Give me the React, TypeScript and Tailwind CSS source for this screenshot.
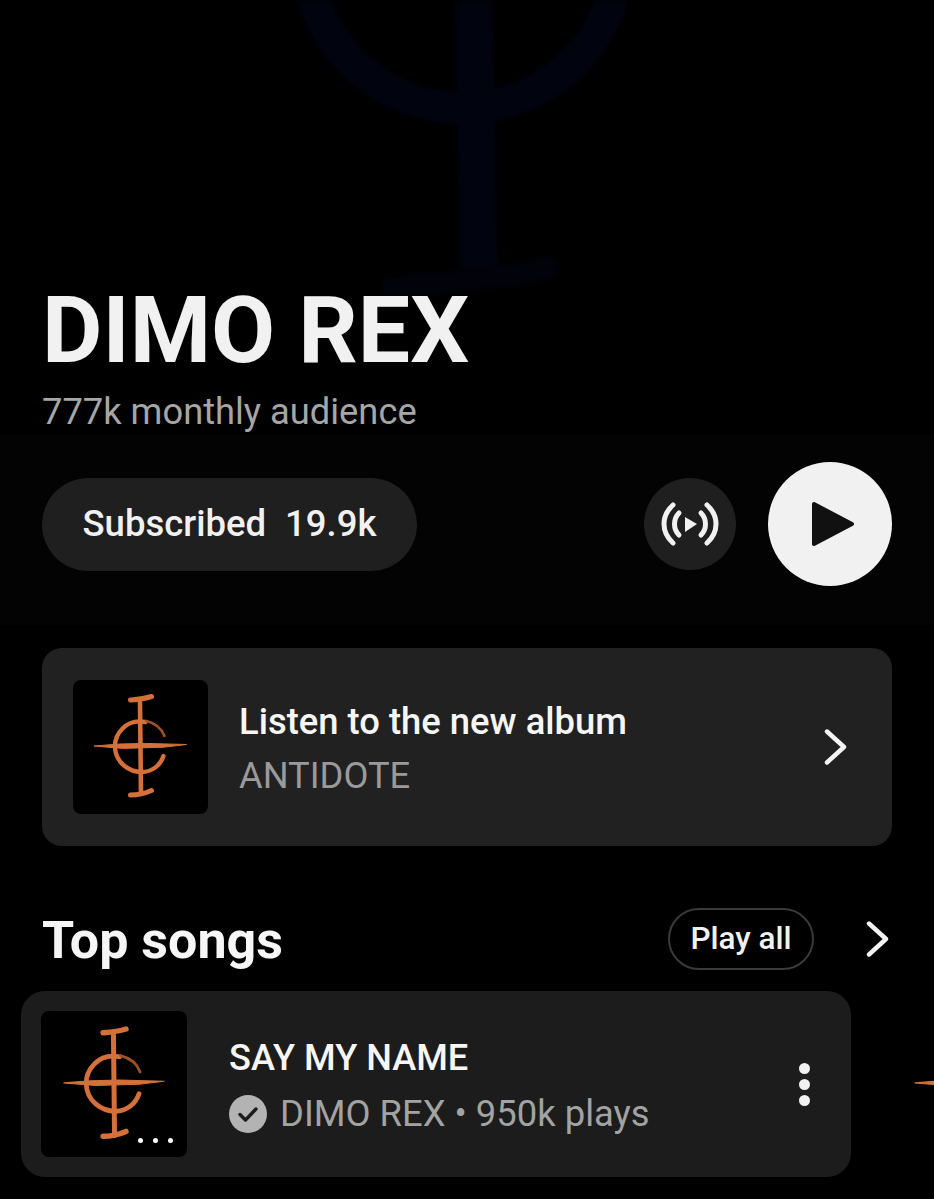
function Sigil({ className }: { className?: string }) {
  return (
    <svg viewBox="0 0 134 134" className={className} fill="none" strokeLinecap="round">
      <g stroke="#d4703a">
        <path d="M66.5 22 L67.5 114" strokeWidth="4.6" />
        <path d="M21 66 L46 64 L72 63.4 L113 64.5 L90 67.2 L50 68.4 Z" fill="#d4703a" strokeWidth="1" strokeLinejoin="round" />
        <path d="M72 42 C52 38 41 55 41.5 67 C42 83 56 92 68 92 C79 92 87 85 90 76" strokeWidth="4.4" />
        <path d="M73 41 C81 43 88 48 91 56" strokeWidth="2.6" stroke="#9a5229" />
        <path d="M57 20 C63 19.5 70 19 78 16.5" strokeWidth="5" />
        <path d="M57 115 C63 115 70 114 78 110.5" strokeWidth="5" />
      </g>
    </svg>
  );
}

function Chevron({ className }: { className?: string }) {
  return (
    <svg viewBox="0 0 24 36" className={className} fill="none" stroke="#f4f4f4" strokeWidth="4.4" strokeLinecap="round" strokeLinejoin="round">
      <path d="M3 2.5 L20 18 L3 33.5" />
    </svg>
  );
}

function Thumb({ size, dots }: { size: string; dots?: boolean }) {
  return (
    <div className={`relative shrink-0 rounded-lg bg-black ${size}`}>
      <Sigil className="h-full w-full" />
      {dots && (
        <div className="absolute bottom-[14px] right-[14px] flex gap-[10px]">
          <span className="h-[5px] w-[5px] rounded-full bg-white" />
          <span className="h-[5px] w-[5px] rounded-full bg-white" />
          <span className="h-[5px] w-[5px] rounded-full bg-white" />
        </div>
      )}
    </div>
  );
}

function SongRow({ title, meta }: { title: string; meta: string }) {
  return (
    <div className="flex h-[186px] w-[830px] shrink-0 items-center rounded-3xl bg-[#1c1c1c] pl-5 pr-[41px]">
      <Thumb size="h-[146px] w-[146px]" dots />
      <div className="ml-[42px] min-w-0 flex-1 pt-[4px]">
        <p className="text-[36.2px] leading-[44px] font-medium text-[#f6f6f6]">{title}</p>
        <div className="mt-[12px] flex items-center gap-[13px]">
          <svg viewBox="0 0 38 38" className="h-[38px] w-[38px]">
            <circle cx="19" cy="19" r="19" fill="#b3b3b3" />
            <path d="M11 19.5 L16.5 25 L27 14" fill="none" stroke="#1c1c1c" strokeWidth="3.4" strokeLinecap="round" strokeLinejoin="round" />
          </svg>
          <p className="text-[36.4px] leading-[44px] text-[#a3a3a3]">{meta}</p>
        </div>
      </div>
      <div className="flex flex-col gap-[5px]">
        <span className="h-[11px] w-[11px] rounded-full bg-[#f1f1f1]" />
        <span className="h-[11px] w-[11px] rounded-full bg-[#f1f1f1]" />
        <span className="h-[11px] w-[11px] rounded-full bg-[#f1f1f1]" />
      </div>
    </div>
  );
}

export default function App() {
  return (
    <div className="relative h-[1199px] w-[934px] overflow-hidden bg-black font-['Roboto',sans-serif]">
      {/* faded cover art behind the header */}
      <svg viewBox="0 0 934 300" className="absolute inset-x-0 top-0 h-[300px] w-[934px] blur-[2px]" fill="none">
        <g stroke="#01030e">
          <circle cx="463" cy="-49" r="157" strokeWidth="33" />
          <path d="M474 0 L479 268" strokeWidth="38" />
        </g>
        <path d="M392 287 C440 282 500 280 548 268" stroke="#01020a" strokeWidth="22" strokeLinecap="round" />
      </svg>

      <div className="relative">
        <h1 className="pt-[279px] pl-[42px] text-[93px] leading-[104px] font-bold text-[#f1f1f1]">DIMO REX</h1>
        <p className="mt-[6px] pl-[42px] text-[36.3px] leading-[46px] text-[#a6a6a6]">777k monthly audience</p>

        <div className="flex items-center justify-between bg-[#030303] px-[42px] pt-[27px] pb-[39px]">
          <div className="flex h-[93px] w-[375px] items-center justify-center gap-[19px] rounded-full bg-[#1f1f1f] text-[36.5px] font-medium text-[#f1f1f1]">
            <span>Subscribed</span>
            <span>19.9k</span>
          </div>
          <div className="flex items-center gap-[32px]">
            <div className="flex h-[92px] w-[92px] items-center justify-center rounded-full bg-[#1f1f1f]">
              <svg viewBox="-30 -30 60 60" className="h-[60px] w-[60px]" fill="none" stroke="#f1f1f1" strokeWidth="5" strokeLinecap="round">
                <path d="M-17 -19 C-29 -8 -29 8 -17 19" />
                <path d="M-11 -11 C-17 -5 -17 5 -11 11" />
                <path d="M11 -11 C17 -5 17 5 11 11" />
                <path d="M17 -19 C29 -8 29 8 17 19" />
                <path d="M-5 -7 L7 0 L-5 8 Z" fill="#f1f1f1" stroke="none" />
              </svg>
            </div>
            <div className="flex h-[124px] w-[124px] items-center justify-center rounded-full bg-[#f1f1f1]">
              <svg viewBox="0 0 44 46" className="ml-[5px] h-[46px] w-[44px]">
                <path d="M3 3 L41 23 L3 43 Z" fill="#111111" stroke="#111111" strokeWidth="4" strokeLinejoin="round" />
              </svg>
            </div>
          </div>
        </div>

        <div className="mx-[42px] mt-[23px] flex h-[198px] items-center rounded-[20px] bg-[#212121] pl-[31px] pr-[44px]">
          <Thumb size="h-[134px] w-[135px]" />
          <div className="ml-[31px] flex-1 pt-[4px]">
            <p className="text-[36.4px] leading-[44px] font-medium text-[#f6f6f6]">Listen to the new album</p>
            <p className="mt-[10px] text-[36.3px] leading-[44px] text-[#9a9a9a]">ANTIDOTE</p>
          </div>
          <Chevron className="h-[36px] w-[24px]" />
        </div>

        <div className="mt-[62px] flex h-[62px] items-center pl-[42px] pr-[44px]">
          <h2 className="flex-1 pt-[3px] text-[52px] font-bold text-[#f6f6f6]">Top songs</h2>
          <div className="flex h-[62px] w-[146px] items-center justify-center rounded-full border-2 border-[#3a3a3a] text-[31.5px] font-medium text-[#f1f1f1]">
            Play all
          </div>
          <Chevron className="ml-[52px] h-[36px] w-[24px]" />
        </div>

        <div className="mt-[21px] flex gap-[41px] pl-[21px]">
          <SongRow title="SAY MY NAME" meta="DIMO REX • 950k plays" />
          {/* next row of the carousel, only its artwork shows */}
          <Thumb size="h-[146px] w-[146px] mt-[20px]" />
        </div>
      </div>
    </div>
  );
}
